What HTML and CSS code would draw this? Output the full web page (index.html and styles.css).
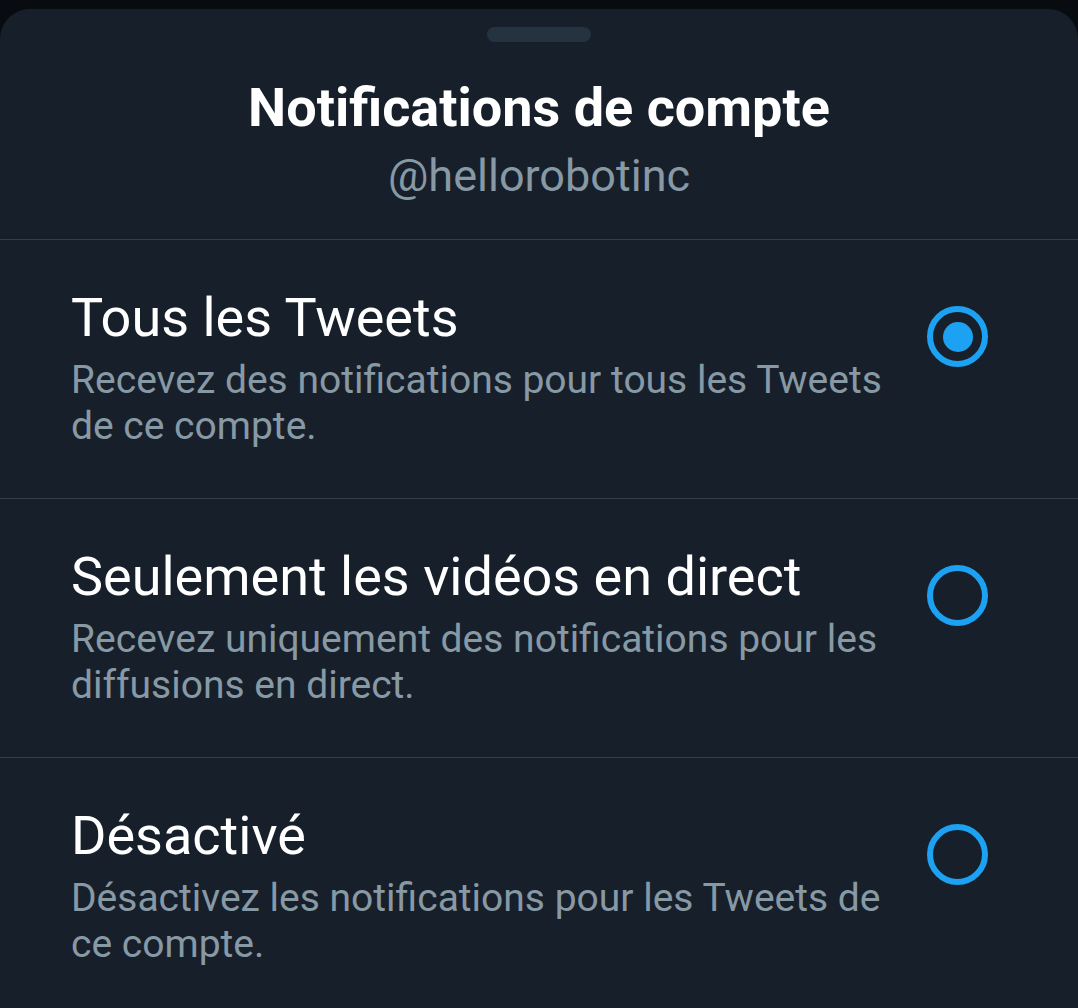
FILE: index.html
```html
<!DOCTYPE html>
<html lang="fr">
<head>
<meta charset="utf-8">
<title>Notifications de compte</title>
<link rel="stylesheet" href="styles.css">
</head>
<body>
<div class="sheet">
  <div class="grabber"></div>
  <header class="head">
    <h1 class="title">Notifications de compte</h1>
    <div class="handle">@hellorobotinc</div>
  </header>
  <ul class="options">
    <li class="option">
      <div class="text">
        <div class="label">Tous les Tweets</div>
        <div class="desc">Recevez des notifications pour tous les Tweets de ce compte.</div>
      </div>
      <span class="radio checked"></span>
    </li>
    <li class="option">
      <div class="text">
        <div class="label">Seulement les vidéos en direct</div>
        <div class="desc">Recevez uniquement des notifications pour les diffusions en direct.</div>
      </div>
      <span class="radio"></span>
    </li>
    <li class="option">
      <div class="text">
        <div class="label">Désactivé</div>
        <div class="desc">Désactivez les notifications pour les Tweets de ce compte.</div>
      </div>
      <span class="radio"></span>
    </li>
  </ul>
</div>
</body>
</html>
```

FILE: styles.css
```css
html, body {
  margin: 0;
  padding: 0;
  background: #080c10;
  height: 100%;
  overflow: hidden;
}
body {
  font-family: Roboto, "Noto Sans", sans-serif;
  padding-top: 9px;
}
.sheet {
  background: #17202a;
  border-radius: 30px 30px 0 0;
  min-height: 1000px;
  display: flex;
  flex-direction: column;
}
.grabber {
  width: 104px;
  height: 15px;
  border-radius: 8px;
  background: #253341;
  margin: 18px auto 0;
}
.head {
  text-align: center;
  padding-top: 34px;
  padding-bottom: 37px;
  border-bottom: 1px solid #323e49;
}
.title {
  margin: 0;
  font-size: 54px;
  line-height: 64px;
  font-weight: 700;
  color: #ffffff;
}
.handle {
  font-size: 45px;
  line-height: 52px;
  color: #8899a6;
  margin-top: 10px;
}
.options {
  list-style: none;
  margin: 0;
  padding: 0;
}
.option {
  display: flex;
  align-items: flex-start;
  padding: 46px 90px 49px 71px;
  border-bottom: 1px solid #323e49;
}
.text {
  flex: 1;
  padding-right: 30px;
}
.label {
  font-size: 54px;
  line-height: 64px;
  color: #ffffff;
}
.desc {
  font-size: 39px;
  line-height: 46px;
  color: #8899a6;
  margin-top: 7px;
}
.radio {
  flex: none;
  width: 61px;
  height: 61px;
  box-sizing: border-box;
  border: 6.5px solid #1da1f2;
  border-radius: 50%;
  margin-top: 20px;
  display: flex;
  align-items: center;
  justify-content: center;
}
.radio.checked::after {
  content: "";
  width: 30px;
  height: 30px;
  border-radius: 50%;
  background: #1da1f2;
}
```
